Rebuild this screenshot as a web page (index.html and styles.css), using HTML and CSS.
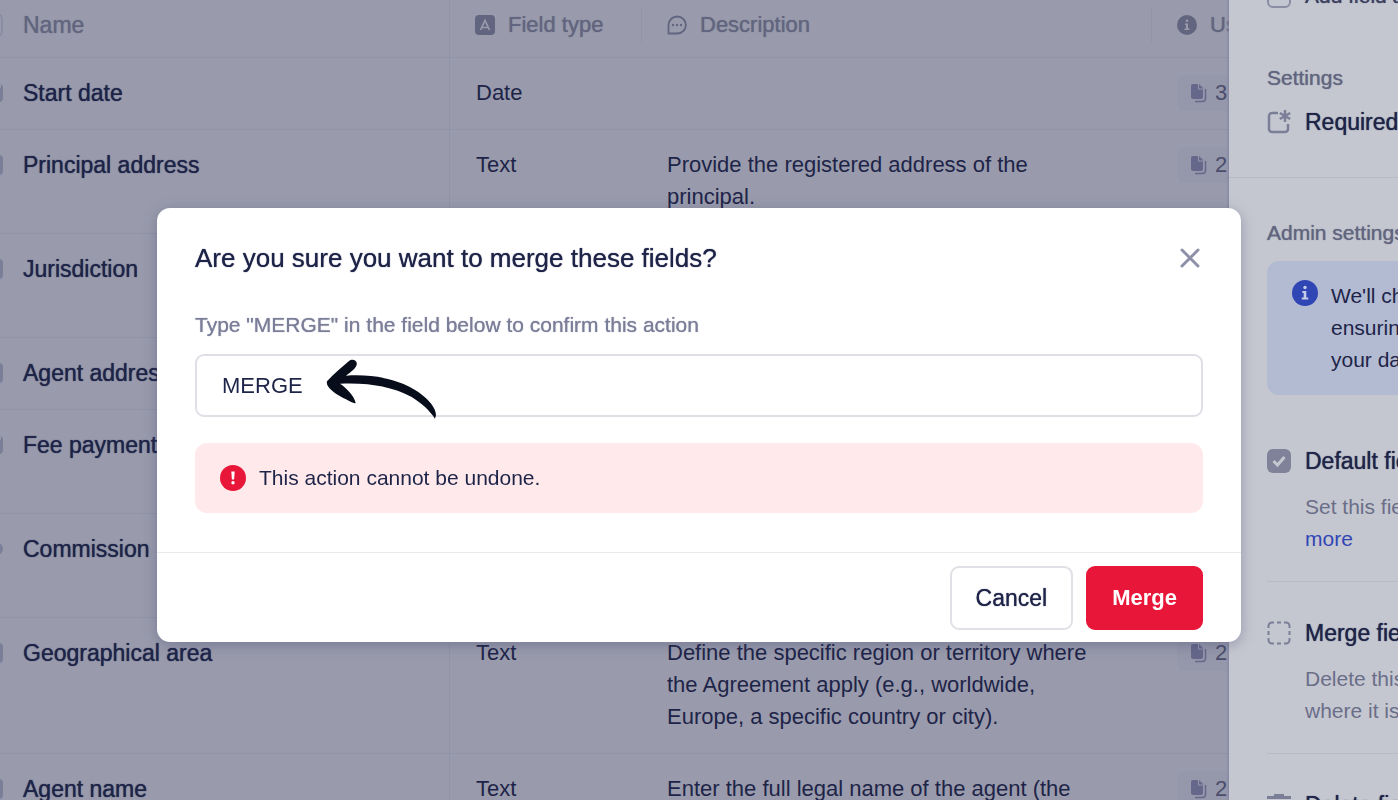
FILE: index.html
```html
<!DOCTYPE html>
<html lang="en">
<head>
  <meta charset="UTF-8">
  <meta name="viewport" content="width=device-width, initial-scale=1.0">
  <title>Merge fields</title>
  <link rel="stylesheet" href="styles.css">
</head>
<body>
  <!-- shared icons -->
  <svg class="sprite" aria-hidden="true">
    <symbol id="icon-pages" viewBox="0 0 18 20">
      <path d="M3 1h5v5.500h5V14a2 2 0 0 1-2 2H3a2 2 0 0 1-2-2V3a2 2 0 0 1 2-2z" fill="currentColor"/>
      <path d="M9 1v4.500h4.500z" fill="currentColor"/>
      <path d="M15.500 6v9.500a3 3 0 0 1-3 3H5" fill="none" stroke="currentColor" stroke-width="1.500"/>
    </symbol>
    <symbol id="icon-info" viewBox="0 0 20 20">
      <circle cx="10" cy="10" r="10" fill="currentColor"/>
      <circle class="cut" cx="10" cy="5.800" r="1.300"/>
      <path class="cut" d="M8 8.500h3v5h1.500V15h-5v-1.500H9V10H8z"/>
    </symbol>
  </svg>

  <div class="page">
    <main class="fields">
      <table class="fields-table">
        <colgroup>
          <col class="col-name">
          <col class="col-type">
          <col>
          <col class="col-usage">
        </colgroup>
        <thead>
          <tr>
            <th><div class="name"><input class="check" type="checkbox" aria-label="Select all">Name</div></th>
            <th>
              <div class="head">
                <svg class="icon" viewBox="0 0 20 20"><rect width="20" height="20" rx="4" fill="currentColor"/><path d="M5.500 15 10 5.500 14.500 15M7.500 12.500h5" fill="none" stroke="#999bac" stroke-width="1.700"/></svg>
                Field type
              </div>
            </th>
            <th>
              <div class="head split">
                <svg class="icon" viewBox="0 0 20 20"><path d="M1.500 18.500V10a8.700 8.500 0 1 1 8.700 8.500z" fill="none" stroke="currentColor" stroke-width="1.800"/><g fill="currentColor"><circle cx="6" cy="10" r="1.200"/><circle cx="10" cy="10" r="1.200"/><circle cx="14" cy="10" r="1.200"/></g></svg>
                Description
              </div>
            </th>
            <th>
              <div class="head split">
                <svg class="icon"><use href="#icon-info"/></svg>
                Usage
              </div>
            </th>
          </tr>
        </thead>
        <tbody>
          <tr>
            <td><div class="name"><span class="kind date"></span>Start date</div></td>
            <td>Date</td>
            <td></td>
            <td><span class="count"><svg><use href="#icon-pages"/></svg>3</span></td>
          </tr>
          <tr class="lines-2">
            <td><div class="name"><span class="kind"></span>Principal address</div></td>
            <td>Text</td>
            <td>Provide the registered address of the<br>principal.</td>
            <td><span class="count"><svg><use href="#icon-pages"/></svg>2</span></td>
          </tr>
          <tr class="lines-2">
            <td><div class="name"><span class="kind"></span>Jurisdiction</div></td>
            <td></td><td></td><td></td>
          </tr>
          <tr>
            <td><div class="name"><span class="kind"></span>Agent address</div></td>
            <td></td><td></td><td></td>
          </tr>
          <tr class="lines-2">
            <td><div class="name"><span class="kind date"></span>Fee payment</div></td>
            <td></td><td></td><td></td>
          </tr>
          <tr class="lines-2">
            <td><div class="name"><span class="kind round"></span>Commission</div></td>
            <td></td><td></td><td></td>
          </tr>
          <tr class="lines-3">
            <td><div class="name"><span class="kind"></span>Geographical area</div></td>
            <td>Text</td>
            <td>Define the specific region or territory where<br>the Agreement apply (e.g., worldwide,<br>Europe, a specific country or city).</td>
            <td><span class="count"><svg><use href="#icon-pages"/></svg>2</span></td>
          </tr>
          <tr>
            <td><div class="name"><span class="kind"></span>Agent name</div></td>
            <td>Text</td>
            <td>Enter the full legal name of the agent (the</td>
            <td><span class="count"><svg><use href="#icon-pages"/></svg>2</span></td>
          </tr>
        </tbody>
      </table>
    </main>

    <aside class="panel">
      <section class="panel-top">
        <label class="option small"><input class="check" type="checkbox">Add field a</label>
        <h2>Settings</h2>
        <div class="option">
          <svg class="option-icon" viewBox="0 0 24 24"><path d="M11 3H5a3 3 0 0 0-3 3v13a3 3 0 0 0 3 3h13a3 3 0 0 0 3-3v-5" fill="none" stroke="currentColor" stroke-width="2.500"/><path d="M18 0v12M12.800 3l10.400 6M23.200 3 12.800 9" stroke="currentColor" stroke-width="2.500"/></svg>
          Required
        </div>
      </section>

      <section class="panel-admin">
        <h2>Admin settings</h2>
        <div class="note">
          <svg class="note-icon"><use href="#icon-info"/></svg>
          <p>We'll check<br>ensuring<br>your data</p>
        </div>
        <div class="setting">
          <label class="option"><input class="check" type="checkbox" checked>Default field</label>
          <p>Set this field<br><a href="#">more</a></p>
        </div>
        <div class="setting">
          <div class="option">
            <svg class="option-icon" viewBox="0 0 24 24"><path d="M1.500 7V5a3.500 3.500 0 0 1 3.500-3.500h2M17 1.500h2A3.500 3.500 0 0 1 22.500 5v2M22.500 17v2a3.500 3.500 0 0 1-3.500 3.500h-2M7 22.500H5A3.500 3.500 0 0 1 1.500 19v-2M10 1.500h4M10 22.500h4M1.500 10v4M22.500 10v4" fill="none" stroke="currentColor" stroke-width="2"/></svg>
            Merge field
          </div>
          <p>Delete this field<br>where it is</p>
        </div>
        <div class="setting">
          <div class="option">
            <svg class="option-icon" viewBox="0 0 24 24"><path d="M7 1h10v2h7v3H0V3h7zM3 8h18v16H3z" fill="currentColor"/></svg>
            Delete field
          </div>
        </div>
      </section>
    </aside>
  </div>

  <div class="overlay">
    <form class="modal" role="dialog" aria-labelledby="modal-title">
      <div class="modal-body">
        <header class="modal-header">
          <h1 id="modal-title">Are you sure you want to merge these fields?</h1>
          <button class="close" type="button" aria-label="Close">
            <svg viewBox="0 0 20 20"><path d="M2 2l16 16M18 2 2 18" stroke="currentColor" stroke-width="3" stroke-linecap="round"/></svg>
          </button>
        </header>
        <label class="confirm-label" for="confirm">Type "MERGE" in the field below to confirm this action</label>
        <div class="confirm">
          <input id="confirm" type="text" value="MERGE">
          <svg class="arrow" viewBox="525 170 339 189"><path d="M531 243C550 221 576 200 597 182C606 174 623 179 620 193C617 205 603 214 588 226C690 220 760 244 806 276C838 299 857 323 858 344L855 355C838 330 816 309 785 290C730 259 655 246 570 250C594 266 614 290 617 308C612 311 602 304 588 297C566 287 545 274 534 258Q529 251 531 243z" fill="#080d1c"/></svg>
        </div>
        <div class="alert" role="alert">
          <svg viewBox="0 0 26 26"><circle cx="13" cy="13" r="13" fill="#e81739"/><path d="M11.300 6.500h3.400l-.6 8h-2.200z" fill="#fff"/><circle cx="13" cy="17.800" r="1.700" fill="#fff"/></svg>
          This action cannot be undone.
        </div>
      </div>
      <footer class="modal-footer">
        <button class="btn" type="button">Cancel</button>
        <button class="btn danger" type="submit">Merge</button>
      </footer>
    </form>
  </div>
</body>
</html>
```
FILE: styles.css
```css
:root {
  --table: #999bac;
  --table-line: #9193a6;
  --panel: #c5c7d0;
  --panel-line: #b8bac5;
  --dark: #1e2448;
  --muted: #62657f;
  --icon: #7b7e97;
  --red: #e81739;
}

* {
  box-sizing: border-box;
}

body {
  margin: 0;
  font-family: "Liberation Sans", Arial, sans-serif;
  font-size: 22px;
  line-height: 32px;
  color: var(--dark);
  background: var(--table);
}

h1,
h2,
p {
  margin: 0;
}

.sprite {
  display: none;
}

.page {
  display: grid;
  grid-template-columns: minmax(0, 1fr) 169px;
  height: 100vh;
  overflow: hidden;
}

/* table */
.fields {
  overflow: hidden;
}

.fields-table {
  width: 100%;
  table-layout: fixed;
  border-collapse: separate;
  border-spacing: 0;
  white-space: nowrap;
}

.col-name {
  width: 450px;
}

.col-type {
  width: 191px;
}

.col-usage {
  width: 78px;
}

th {
  height: 58px;
  padding: 0 0 7px;
  font-weight: 400;
  text-align: left;
  color: var(--muted);
  border-bottom: 1px solid var(--table-line);
}

td {
  height: 72px;
  padding: 19px 0 20px 26px;
  vertical-align: top;
  border-bottom: 1px solid var(--table-line);
}

th:first-child,
td:first-child {
  padding-left: 0;
  border-right: 1px solid var(--table-line);
}

.lines-2 td {
  height: 104px;
}

.lines-3 td {
  height: 136px;
}

th,
.name,
.option,
.panel h2 {
  text-shadow: 0 0 1px currentColor;
}

.head {
  display: flex;
  align-items: center;
  gap: 13px;
  height: 34px;
  padding-left: 25px;
}

.split {
  border-left: 1px solid var(--table-line);
}

.icon {
  width: 20px;
  height: 20px;
  flex: none;
}

.cut {
  fill: var(--table);
}

/* the icons hang over the left edge of the scrolled table */
.name {
  display: flex;
  align-items: center;
  gap: 20px;
  margin-left: -21px;
  font-size: 23px;
}

.kind {
  width: 24px;
  height: 20px;
  border-radius: 4px;
  background: var(--icon);
}

.kind.date {
  height: 18px;
  border-top: 4px dotted var(--table);
}

.kind.round {
  height: 12px;
  border-radius: 6px;
}

.count {
  display: flex;
  align-items: center;
  gap: 7px;
  height: 36px;
  margin: -2px 0;
  padding-left: 13px;
  border-radius: 8px 0 0 8px;
  background: #9597aa;
  color: #4a4d6c;
}

.count svg {
  width: 18px;
  height: 20px;
  color: #65688a;
}

.check {
  appearance: none;
  flex: none;
  width: 24px;
  height: 24px;
  margin: 0;
  border: 2px solid #898ca2;
  border-radius: 6px;
}

.check:checked {
  border: 0;
  background: #7f8299 url("data:image/svg+xml,%3Csvg xmlns='http://www.w3.org/2000/svg' viewBox='0 0 24 24'%3E%3Cpath d='M6.500 12l4 4 7-8' fill='none' stroke='%23c5c7d0' stroke-width='3'/%3E%3C/svg%3E");
}

/* side panel */
.panel {
  overflow: hidden;
  white-space: nowrap;
  background: var(--panel);
  box-shadow: -1px 0 2px #8385a3;
}

.panel h2 {
  font-size: 21px;
  font-weight: 400;
  color: var(--muted);
}

.option {
  display: flex;
  align-items: center;
  gap: 14px;
  font-size: 23px;
}

.option.small {
  font-size: 21px;
  color: #3c4060;
}

.option-icon {
  width: 24px;
  height: 24px;
  flex: none;
  color: var(--icon);
}

.panel-top {
  display: flow-root;
  height: 178px;
  padding-left: 38px;
  border-bottom: 1px solid var(--panel-line);
}

.panel-top .small {
  margin-top: -20px;
}

.panel-top h2 {
  margin: 50px 0 12px;
}

.panel-admin {
  padding: 39px 0 0 38px;
}

.note {
  display: flex;
  gap: 13px;
  margin: 12px 0 50px;
  padding: 19px 0 19px 25px;
  border-radius: 12px 0 0 12px;
  background: #b2bbd2;
  font-size: 21px;
}

.note-icon {
  --table: #c5cde8;
  width: 26px;
  height: 26px;
  flex: none;
  color: #3146b5;
}

.setting {
  padding-bottom: 26px;
  border-bottom: 1px solid var(--panel-line);
}

.setting + .setting {
  padding-top: 35px;
}

.setting p {
  margin: 14px 0 0 38px;
  font-size: 21px;
  color: #6b6e89;
}

.setting a {
  color: #3146b5;
  text-decoration: none;
}

/* dialog */
.overlay {
  position: fixed;
  inset: 0;
  display: grid;
  place-items: center;
  padding: 50px 157px 0;
}

.modal {
  width: 100%;
  max-width: 1084px;
  border-radius: 13px;
  background: #fff;
  box-shadow: 0 3px 14px rgba(60, 64, 105, 0.35);
}

.modal-body {
  padding: 32px 38px 39px;
}

.modal-header {
  display: flex;
  align-items: center;
  justify-content: space-between;
  height: 36px;
}

.modal h1 {
  font-size: 26px;
  font-weight: 400;
  text-shadow: 0 0 1px currentColor;
}

.close {
  padding: 3px;
  border: 0;
  background: none;
  color: #8d90a8;
}

.close svg {
  display: block;
  width: 20px;
  height: 20px;
}

.confirm-label {
  display: block;
  margin: 33px 0 13px;
  font-size: 21px;
  color: #7b7e98;
  text-shadow: 0 0 1px currentColor;
}

.confirm {
  position: relative;
}

.confirm input {
  display: block;
  width: 100%;
  height: 63px;
  padding: 0 25px;
  border: 2px solid #dfe0e6;
  border-radius: 9px;
  outline: 0;
  font: inherit;
  color: var(--dark);
}

.arrow {
  position: absolute;
  left: 130px;
  top: 3px;
  width: 113px;
  height: 63px;
}

.alert {
  display: flex;
  align-items: center;
  gap: 13px;
  height: 70px;
  margin-top: 26px;
  padding: 0 25px;
  border-radius: 12px;
  background: #ffe9eb;
  font-size: 21px;
}

.alert svg {
  width: 26px;
  height: 26px;
}

.modal-footer {
  display: flex;
  justify-content: flex-end;
  gap: 13px;
  padding: 13px 38px 12px;
  border-top: 1px solid #e9eaee;
}

.btn {
  height: 64px;
  padding: 0 24px;
  border: 2px solid #e0e1e6;
  border-radius: 9px;
  background: #fff;
  font: 23px "Liberation Sans", Arial, sans-serif;
  color: var(--dark);
  text-shadow: 0 0 1px currentColor;
}

.danger {
  border-color: var(--red);
  background: var(--red);
  color: #fff;
  font-weight: 700;
  font-size: 22px;
  text-shadow: none;
}
```
